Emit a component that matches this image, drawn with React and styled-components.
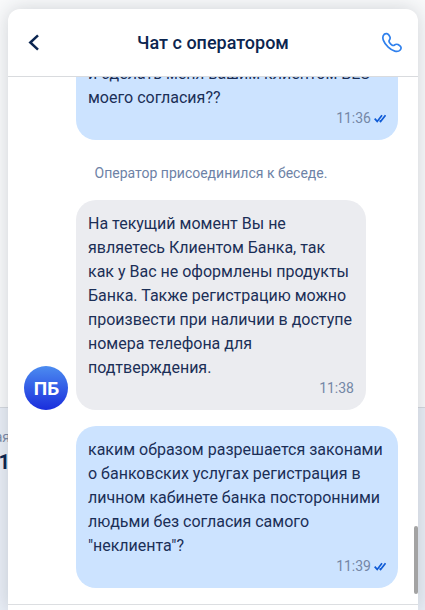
import React from "react";
import styled, { createGlobalStyle } from "styled-components";

const GlobalStyle = createGlobalStyle`
  * {
    box-sizing: border-box;
  }
  body {
    margin: 0;
    font-family: Roboto, "Liberation Sans", sans-serif;
    color: #1b2f57;
  }
`;

const Page = styled.div`
  position: relative;
  height: 610px;
  padding: 9px 7px 0 8px;
  overflow: hidden;
  background: linear-gradient(#f9fafb 407px, #d5d9df 407px, #d5d9df 408px, #e9eef6 408px);
`;

// The account page that shows from under the chat
const Behind = styled.div`
  position: absolute;
  top: 428px;
  right: 415px;
  text-align: right;
  white-space: nowrap;
`;

const BehindLabel = styled.div`
  font-size: 14px;
  line-height: 18px;
  color: #7b8ba8;
`;

const BehindValue = styled.div`
  font-size: 20px;
  font-weight: 700;
  line-height: 32px;
  color: #0b2550;
`;

const Chat = styled.div`
  position: relative;
  display: flex;
  flex-direction: column;
  height: 601px;
  border-radius: 12px 12px 0 0;
  background: white;
  box-shadow: 0 0 20px rgba(30, 40, 60, 0.19);
`;

const Header = styled.div`
  flex: none;
  display: flex;
  align-items: center;
  justify-content: space-between;
  height: 68px;
  padding: 0 15px 0 18px;
  border-bottom: 1px solid #d9dbde;
`;

const IconButton = styled.button`
  display: flex;
  padding: 0;
  border: 0;
  background: none;
`;

const Title = styled.div`
  padding-left: 3px;
  font-size: 18px;
  font-weight: 500;
  color: #0b2550;
`;

const Messages = styled.div`
  position: relative;
  flex: 1;
  display: flex;
  flex-direction: column;
  justify-content: flex-end;
  min-height: 0;
  padding: 0 20px 16px 16px;
  overflow: hidden;
`;

const Row = styled.div`
  display: flex;
  align-items: flex-end;
  gap: 8px;
  margin-top: 16px;
  padding-left: ${props => (props.$own ? "52px" : "0")};
`;

const Avatar = styled.div`
  display: flex;
  align-items: center;
  justify-content: center;
  width: 44px;
  height: 44px;
  padding-left: 1px;
  border-radius: 50%;
  background: linear-gradient(#4c8cf0, #1a2ddc);
  color: white;
  font-size: 19px;
  font-weight: 700;
`;

const Bubble = styled.div`
  width: ${props => (props.$own ? "322px" : "290px")};
  padding: 12px 12px 13px;
  border-radius: 20px;
  background: ${props => (props.$own ? "#cce3ff" : "#ebecf0")};
`;

const Text = styled.div`
  font-size: 16px;
  line-height: 24px;
  white-space: pre;
`;

const Meta = styled.div`
  display: flex;
  align-items: center;
  justify-content: flex-end;
  gap: 3px;
  height: 17px;
  font-size: 14px;
  line-height: 17px;
  color: #7487a6;
`;

const Notice = styled.div`
  margin: 23px 0 1px;
  font-size: 14px;
  line-height: 20px;
  text-align: center;
  color: #6d82a6;
`;

const Scrollbar = styled.div`
  position: absolute;
  right: 0;
  bottom: 10px;
  width: 4px;
  height: 68px;
  border-radius: 2px;
  background: #a3a3a3;
`;

const Composer = styled.div`
  flex: none;
  height: 6px;
  border-top: 1px solid #dcdee1;
`;

const BackIcon = () => (
  <svg width="16" height="18" viewBox="0 0 16 18" fill="none">
    <path d="M12 1.300L4.300 8.500l7.700 7.200" stroke="#0b2550" strokeWidth="2.500" />
  </svg>
);

const PhoneIcon = () => (
  <svg width="22" height="22" viewBox="0 0 22 22" fill="none">
    <path
      d="M3.200 2.300C4.900 1.100 7 1.500 8 3.200L8.800 4.600C9.600 6.100 9.100 7.200 8.300 8.200C7.700 9 8 9.700 8.500 10.500C9.300 11.700 10.200 12.600 11.200 13.200C12 13.700 12.700 13.600 13.500 13C14.500 12.200 15.700 12 17 12.600L18.500 13.500C20.400 14.700 20.500 16.600 19.200 18C16.600 20.900 11.400 19.200 7.200 15.200C3 11.200 0 5.300 3.200 2.300z"
      stroke="#2f80ed"
      strokeWidth="1.700"
      strokeLinejoin="round"
    />
  </svg>
);

const ReadIcon = () => (
  <svg width="12" height="9" viewBox="0 0 12 9" fill="none">
    <path
      d="M.7 4.600L3.200 7.400L8 1.200M5.600 6.500L6.600 7.500L11.500 1.200"
      stroke="#0f5bd6"
      strokeWidth="1.700"
    />
  </svg>
);

const Message = ({ own, time, text }) => (
  <Row $own={own}>
    {!own && <Avatar>ПБ</Avatar>}
    <Bubble $own={own}>
      <Text>{text}</Text>
      <Meta>
        {time}
        {own && <ReadIcon />}
      </Meta>
    </Bubble>
  </Row>
);

const firstText = `и сделать меня вашим клиентом БЕЗ
моего согласия??`;

const replyText = `На текущий момент Вы не
являетесь Клиентом Банка, так
как у Вас не оформлены продукты
Банка. Также регистрацию можно
произвести при наличии в доступе
номера телефона для
подтверждения.`;

const questionText = `каким образом разрешается законами
о банковских услугах регистрация в
личном кабинете банка посторонними
людьми без согласия самого
"неклиента"?`;

const App = () => (
  <>
    <GlobalStyle />
    <Page>
      <Behind>
        <BehindLabel>ая</BehindLabel>
        <BehindValue>1</BehindValue>
      </Behind>
      <Chat>
        <Header>
          <IconButton>
            <BackIcon />
          </IconButton>
          <Title>Чат с оператором</Title>
          <IconButton>
            <PhoneIcon />
          </IconButton>
        </Header>
        <Messages>
          <Message own time="11:36" text={firstText} />
          <Notice>Оператор присоединился к беседе.</Notice>
          <Message time="11:38" text={replyText} />
          <Message own time="11:39" text={questionText} />
          <Scrollbar />
        </Messages>
        <Composer />
      </Chat>
    </Page>
  </>
);

export default App;
